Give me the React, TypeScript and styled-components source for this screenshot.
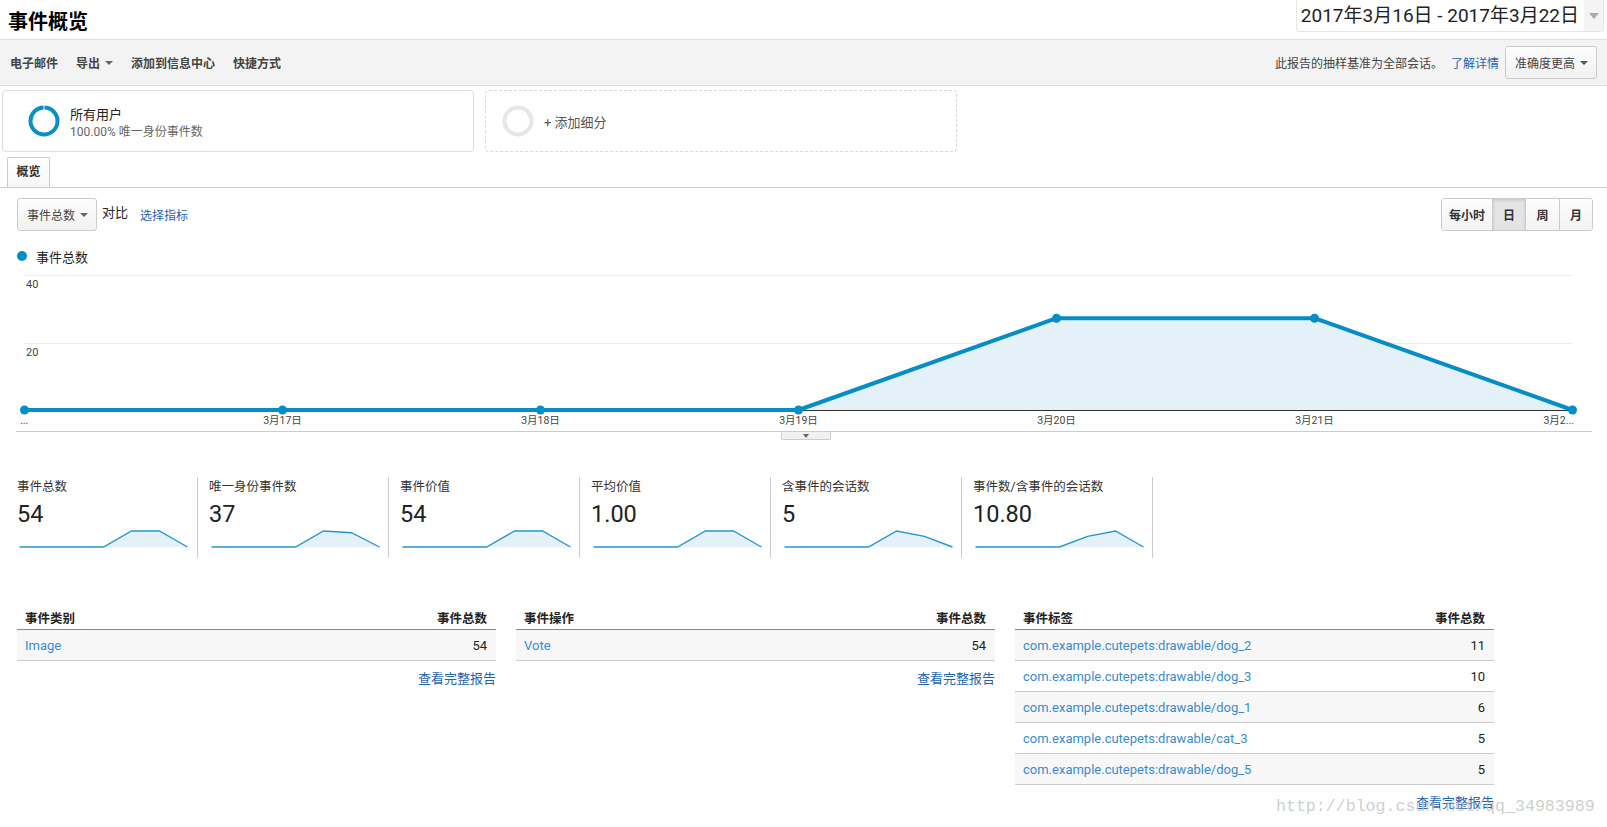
import React from "react";
import styled, { createGlobalStyle } from "styled-components";

const GlobalStyle = createGlobalStyle`
  body {
    margin: 0;
    background: #fff;
    font-family: Roboto, "Noto Sans CJK SC", sans-serif;
    color: #222;
  }
`;

const BLUE = "#058dc7";

const Page = styled.div`
  position: relative;
  width: 1607px;
  height: 827px;
  overflow: hidden;
`;

const Header = styled.div`
  display: flex;
  justify-content: space-between;
  align-items: flex-start;
  height: 39px;
`;

const Title = styled.h1`
  margin: 0;
  padding: 8px 0 0 8px;
  font-family: "Noto Sans CJK SC", sans-serif;
  font-size: 20px;
  line-height: 26px;
  font-weight: 700;
  color: #000;
`;

const DatePicker = styled.div`
  display: flex;
  height: 31px;
  margin-right: 3px;
  border: 1px solid #e6e6e6;
  border-top: none;
  border-radius: 0 0 4px 4px;
  overflow: hidden;
`;

const DateText = styled.div`
  padding: 0 5px 0 4px;
  font-size: 19px;
  line-height: 31px;
  color: #222;
`;

const DateArrow = styled.div`
  width: 19px;
  background: #f4f4f4;
  display: flex;
  align-items: center;
  justify-content: center;

  &::after {
    content: "";
    border-left: 5px solid transparent;
    border-right: 5px solid transparent;
    border-top: 6px solid #aaa;
  }
`;

const Toolbar = styled.div`
  display: flex;
  align-items: center;
  justify-content: space-between;
  height: 45px;
  padding: 0 10px;
  background: #f3f3f3;
  border-top: 1px solid #ddd;
  border-bottom: 1px solid #ddd;
`;

const ToolGroup = styled.div<{ $gap?: number }>`
  display: flex;
  align-items: center;
  gap: ${(p) => (p.$gap === undefined ? 18 : p.$gap)}px;
`;

const ToolItem = styled.span`
  display: flex;
  align-items: center;
  font-size: 12px;
  font-weight: 700;
  color: #444;
`;

const Caret = styled.span<{ $color?: string }>`
  display: inline-block;
  margin-left: 5px;
  border-left: 4px solid transparent;
  border-right: 4px solid transparent;
  border-top: 4px solid ${(p) => p.$color || "#666"};
`;

const Notice = styled.span`
  font-size: 12px;
  color: #444;
`;

const Link = styled.a<{ $size?: number }>`
  font-size: ${(p) => p.$size || 12}px;
  color: #1f64ad;
  text-decoration: none;
`;

const SelectButton = styled.div<{ $w: number }>`
  box-sizing: border-box;
  width: ${(p) => p.$w}px;
  height: 33px;
  display: flex;
  align-items: center;
  justify-content: space-between;
  padding: 0 8px 0 9px;
  border: 1px solid #ccc;
  border-radius: 3px;
  background: linear-gradient(#fdfdfd, #f1f1f1);
  font-size: 12px;
  color: #444;
`;

const Segments = styled.div`
  display: flex;
  gap: 11px;
  padding: 4px 0 0 2px;
`;

const SegmentCard = styled.div<{ $dashed?: boolean }>`
  box-sizing: border-box;
  width: 472px;
  height: 62px;
  display: flex;
  align-items: center;
  gap: 10px;
  padding-left: ${(p) => (p.$dashed ? 16 : 25)}px;
  border: 1px ${(p) => (p.$dashed ? "dashed #d8d8d8" : "solid #ddd")};
  border-radius: 4px;
`;

const SegmentText = styled.div`
  padding-top: 3px;
`;

const SegmentName = styled.div`
  font-size: 13px;
  line-height: 18px;
  color: #222;
`;

const SegmentSub = styled.div`
  font-size: 12px;
  line-height: 16px;
  color: #666;
`;

const AddSegment = styled.span`
  font-size: 13px;
  color: #555;
`;

const Tabs = styled.div`
  display: flex;
  margin-top: 5px;
  padding-left: 7px;
  border-bottom: 1px solid #ccc;
`;

const Tab = styled.div`
  box-sizing: border-box;
  width: 43px;
  height: 30px;
  line-height: 29px;
  text-align: center;
  font-size: 12px;
  font-weight: 700;
  color: #333;
  border: 1px solid #ccc;
  border-bottom: none;
  border-radius: 2px 2px 0 0;
  background: linear-gradient(#fff, #f7f7f7);
`;

const Controls = styled.div`
  display: flex;
  justify-content: space-between;
  align-items: flex-start;
  margin-top: 10px;
  padding: 0 14px 0 17px;
`;

const ControlLeft = styled.div`
  display: flex;
  align-items: center;
`;

const CompareLabel = styled.span`
  margin: -7px 0 0 5px;
  font-size: 13px;
  color: #222;
`;

const Granularity = styled.div`
  display: flex;
  height: 33px;
  border: 1px solid #ccc;
  border-radius: 3px;
  overflow: hidden;
  box-sizing: border-box;
`;

const GranButton = styled.div<{ $w: number; $active?: boolean }>`
  width: ${(p) => p.$w}px;
  display: flex;
  align-items: center;
  justify-content: center;
  font-size: 12px;
  font-weight: 700;
  color: #333;
  background: ${(p) =>
    p.$active ? "#e4e4e4" : "linear-gradient(#fdfdfd, #f3f3f3)"};
  box-shadow: ${(p) => (p.$active ? "inset 0 1px 3px rgba(0,0,0,0.15)" : "none")};

  & + & {
    border-left: 1px solid #ccc;
  }
`;

const Legend = styled.div`
  display: flex;
  align-items: center;
  gap: 9px;
  height: 16px;
  margin: 17px 0 2px;
  padding-left: 17px;
  font-size: 13px;
  color: #222;
`;

const LegendDot = styled.span`
  width: 10px;
  height: 10px;
  border-radius: 50%;
  background: ${BLUE};
`;

const ChartSvg = styled.svg`
  display: block;
`;

const ChartFoot = styled.div`
  margin: 0 15px 0 16px;
  border-top: 1px solid #ccc;
`;

const Handle = styled.div`
  width: 48px;
  height: 7px;
  margin-left: 765px;
  display: flex;
  justify-content: center;
  align-items: center;
  background: #f1f1f1;
  border: 1px solid #ccc;
  border-top: none;
  border-radius: 0 0 2px 2px;

  &::after {
    content: "";
    border-left: 3px solid transparent;
    border-right: 3px solid transparent;
    border-top: 4px solid #666;
  }
`;

const Metrics = styled.div`
  display: flex;
  margin-top: 37px;
  padding-left: 17px;
`;

const Metric = styled.div`
  width: 179px;
  height: 81px;
  padding-left: 11px;
  border-right: 1px solid #ccc;

  &:first-child {
    padding-left: 0;
    width: 180px;
  }
`;

const MetricLabel = styled.div`
  margin-top: 1px;
  font-size: 12.5px;
  line-height: 18px;
  color: #333;
`;

const MetricValue = styled.div`
  margin-top: 5px;
  font-size: 23.5px;
  line-height: 26px;
  color: #222;
`;

const Spark = styled.svg`
  display: block;
  margin-left: 2px;
`;

const Tables = styled.div`
  display: flex;
  gap: 20px;
  margin-top: 48px;
  padding-left: 17px;
`;

const TableBox = styled.div`
  width: 479px;
`;

const Row = styled.div<{ $head?: boolean; $shade?: boolean }>`
  display: flex;
  justify-content: space-between;
  align-items: center;
  height: ${(p) => (p.$head ? 23 : 30)}px;
  padding: 0 9px 0 8px;
  font-size: ${(p) => (p.$head ? 12.5 : 13)}px;
  font-weight: ${(p) => (p.$head ? 700 : 400)};
  color: #222;
  background: ${(p) => (p.$shade ? "#f7f7f7" : "#fff")};
  border-bottom: 1px solid ${(p) => (p.$head ? "#888" : "#ccc")};
`;

const RowLink = styled.span`
  color: #3a8bcd;
`;

const FullReport = styled.div`
  margin-top: 8px;
  text-align: right;
  line-height: 18px;
`;

const Watermark = styled.div`
  position: absolute;
  left: 1276px;
  top: 797px;
  font-family: "Liberation Mono", monospace;
  font-size: 16.6px;
  line-height: 20px;
  color: rgba(190, 190, 190, 0.75);
  pointer-events: none;
`;

const Donut = ({ color, gap }: { color: string; gap?: boolean }) => {
  const r = 13.5;
  const c = 2 * Math.PI * r;
  return (
    <svg width="32" height="32" viewBox="0 0 32 32">
      <circle
        cx="16"
        cy="16"
        r={r}
        fill="none"
        stroke={color}
        strokeWidth="4"
        strokeDasharray={gap ? `${c - 1.5} 1.5` : undefined}
        transform="rotate(-88 16 16)"
      />
    </svg>
  );
};

const Sparkline = ({ values }: { values: number[] }) => {
  const max = Math.max(...values);
  const pts = values.map((v, i) => [0.5 + i * 28, 20 - (v / max) * 16]);
  const line = pts.map((p) => p.join(",")).join(" ");
  const area = `M0.5,20 L${line.replace(/ /g, " L")} L168.5,20 Z`;
  return (
    <Spark width="170" height="22" viewBox="0 0 170 22">
      <path d={area} fill="#e4f1f9" />
      <polyline points={line} fill="none" stroke="#2596cf" strokeWidth="1.4" />
    </Spark>
  );
};

const chartValues = [0, 0, 0, 0, 27, 27, 0];
const chartLabels = ["...", "3月17日", "3月18日", "3月19日", "3月20日", "3月21日", "3月2..."];

const MainChart = () => {
  const pts = chartValues.map((v, i) => [24.5 + i * 258, 144 - v * 3.4]);
  const line = pts.map((p) => p.join(",")).join(" ");
  return (
    <ChartSvg width="1607" height="165" viewBox="0 0 1607 165">
      <line x1="24" x2="1572" y1="9.5" y2="9.5" stroke="#ebebeb" />
      <line x1="24" x2="1572" y1="77.5" y2="77.5" stroke="#ebebeb" />
      <text x="26" y="22" fontSize="11" fill="#444" fontFamily="Roboto, sans-serif">40</text>
      <text x="26" y="90" fontSize="11" fill="#444" fontFamily="Roboto, sans-serif">20</text>
      <path d={`M24.5,144 L${line.replace(/ /g, " L")} L1572.5,144 Z`} fill="#e4f1f8" />
      <line x1="24" x2="1573" y1="144.5" y2="144.5" stroke="#333" />
      <polyline points={line} fill="none" stroke={BLUE} strokeWidth="4" strokeLinejoin="round" />
      {pts.map(([x, y], i) => (
        <circle key={i} cx={x} cy={y} r="4.5" fill={BLUE} />
      ))}
      {pts.map(([x], i) => (
        <text
          key={i}
          x={i === 0 ? 20 : i === 6 ? 1574 : x}
          y="158"
          fontSize="10.5"
          fill="#444"
          textAnchor={i === 0 ? "start" : i === 6 ? "end" : "middle"}
          fontFamily="Roboto, 'Noto Sans CJK SC', sans-serif"
        >
          {chartLabels[i]}
        </text>
      ))}
    </ChartSvg>
  );
};

const metrics = [
  { label: "事件总数", value: "54", spark: [0, 0, 0, 0, 27, 27, 0] },
  { label: "唯一身份事件数", value: "37", spark: [0, 0, 0, 0, 19, 17, 0] },
  { label: "事件价值", value: "54", spark: [0, 0, 0, 0, 27, 27, 0] },
  { label: "平均价值", value: "1.00", spark: [0, 0, 0, 0, 1, 1, 0] },
  { label: "含事件的会话数", value: "5", spark: [0, 0, 0, 0, 3, 2, 0] },
  { label: "事件数/含事件的会话数", value: "10.80", spark: [0, 0, 0, 0, 9, 13.5, 0] },
];

const tables = [
  { head: "事件类别", rows: [["Image", "54"]] },
  { head: "事件操作", rows: [["Vote", "54"]] },
  {
    head: "事件标签",
    rows: [
      ["com.example.cutepets:drawable/dog_2", "11"],
      ["com.example.cutepets:drawable/dog_3", "10"],
      ["com.example.cutepets:drawable/dog_1", "6"],
      ["com.example.cutepets:drawable/cat_3", "5"],
      ["com.example.cutepets:drawable/dog_5", "5"],
    ],
  },
];

const App = () => {
  return (
    <Page>
      <GlobalStyle />
      <Header>
        <Title>事件概览</Title>
        <DatePicker>
          <DateText>2017年3月16日 - 2017年3月22日</DateText>
          <DateArrow />
        </DatePicker>
      </Header>

      <Toolbar>
        <ToolGroup>
          <ToolItem>电子邮件</ToolItem>
          <ToolItem>
            导出
            <Caret />
          </ToolItem>
          <ToolItem>添加到信息中心</ToolItem>
          <ToolItem>快捷方式</ToolItem>
        </ToolGroup>
        <ToolGroup $gap={0}>
          <Notice>此报告的抽样基准为全部会话。</Notice>
          <Link style={{ margin: "0 6px 0 8px" }}>了解详情</Link>
          <SelectButton $w={92}>
            准确度更高
            <Caret $color="#555" />
          </SelectButton>
        </ToolGroup>
      </Toolbar>

      <Segments>
        <SegmentCard>
          <Donut color="#0a8ec8" gap />
          <SegmentText>
            <SegmentName>所有用户</SegmentName>
            <SegmentSub>100.00% 唯一身份事件数</SegmentSub>
          </SegmentText>
        </SegmentCard>
        <SegmentCard $dashed>
          <Donut color="#e6e6e6" />
          <AddSegment>+ 添加细分</AddSegment>
        </SegmentCard>
      </Segments>

      <Tabs>
        <Tab>概览</Tab>
      </Tabs>

      <Controls>
        <ControlLeft>
          <SelectButton $w={80}>
            事件总数
            <Caret $color="#666" />
          </SelectButton>
          <CompareLabel>对比</CompareLabel>
          <Link style={{ marginLeft: 12 }}>选择指标</Link>
        </ControlLeft>
        <Granularity>
          <GranButton $w={50}>每小时</GranButton>
          <GranButton $w={32} $active>日</GranButton>
          <GranButton $w={33}>周</GranButton>
          <GranButton $w={32}>月</GranButton>
        </Granularity>
      </Controls>

      <Legend>
        <LegendDot />
        事件总数
      </Legend>

      <MainChart />
      <ChartFoot>
        <Handle />
      </ChartFoot>

      <Metrics>
        {metrics.map((m) => (
          <Metric key={m.label}>
            <MetricLabel>{m.label}</MetricLabel>
            <MetricValue>{m.value}</MetricValue>
            <Sparkline values={m.spark} />
          </Metric>
        ))}
      </Metrics>

      <Tables>
        {tables.map((t) => (
          <TableBox key={t.head}>
            <Row $head>
              <span>{t.head}</span>
              <span>事件总数</span>
            </Row>
            {t.rows.map(([name, count], i) => (
              <Row key={name} $shade={i % 2 === 0}>
                <RowLink>{name}</RowLink>
                <span>{count}</span>
              </Row>
            ))}
            <FullReport>
              <Link $size={13}>查看完整报告</Link>
            </FullReport>
          </TableBox>
        ))}
      </Tables>

      <Watermark>http://blog.csdn.net/qq_34983989</Watermark>
    </Page>
  );
};

export default App;
